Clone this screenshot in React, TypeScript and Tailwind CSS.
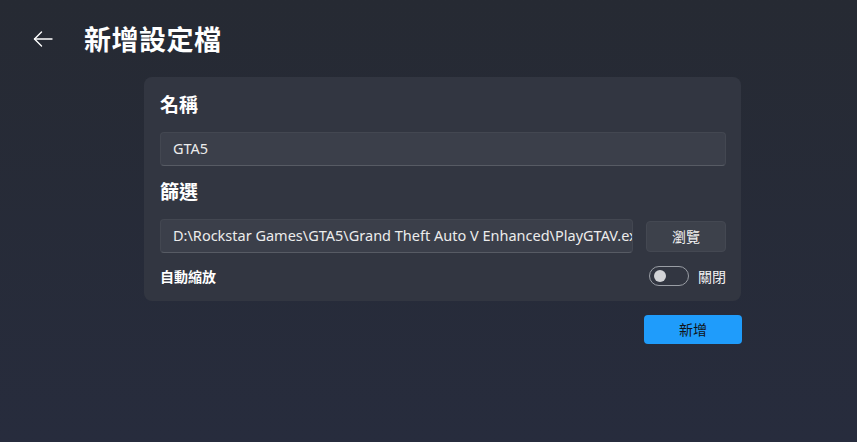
import React from "react";

const cjk = '"Noto Sans CJK TC", "Noto Sans", sans-serif';
const latin = '"Noto Sans", "Noto Sans CJK TC", sans-serif';

function BackArrow() {
  return (
    <svg width="20" height="16" viewBox="0 0 20 16" fill="none" stroke="#ffffff" strokeWidth="1.4" strokeLinecap="round" strokeLinejoin="round">
      <path d="M1.5 8H19" />
      <path d="M8.5 1L1.5 8L8.5 15" />
    </svg>
  );
}

export default function App() {
  return (
    <div
      className="w-[857px] h-[442px] overflow-hidden bg-gradient-to-b from-[#262a33] to-[#272c3d] text-white"
      style={{ fontFamily: cjk }}
    >
      <div className="flex items-center h-[77px]">
        <div className="ml-[33px] w-[20px] flex items-center">
          <BackArrow />
        </div>
        <div className="ml-[31px] text-[27px] font-bold leading-none tracking-[0.5px]">新增設定檔</div>
      </div>

      <div className="ml-[144px] w-[597px] rounded-lg bg-[#323641] pl-4 pr-[15px] pt-[13px] pb-[15px]">
        <div className="h-[28px] leading-[28px] text-[19px] font-bold">名稱</div>
        <div
          className="mt-[14px] h-[34px] rounded-[4px] bg-[#3b3f4a] border border-[#434751] border-b-[#575b64] pl-[12px] flex items-center text-[14.5px] text-[#ececec]"
          style={{ fontFamily: latin }}
        >
          GTA5
        </div>
        <div className="mt-[11px] h-[28px] leading-[28px] text-[19px] font-bold">篩選</div>
        <div className="mt-[14px] flex items-center gap-[13px]">
          <div
            className="flex-1 min-w-0 h-[34px] rounded-[4px] bg-[#3b3f4a] border border-[#434751] border-b-[#575b64] pl-[12px] flex items-center text-[14.5px] text-[#ececec] overflow-hidden whitespace-nowrap"
            style={{ fontFamily: latin }}
          >
            D:\Rockstar Games\GTA5\Grand Theft Auto V Enhanced\PlayGTAV.exe
          </div>
          <div className="w-[80px] h-[31px] rounded-[4px] bg-[#3d414b] border border-[#444852] flex items-center justify-center text-[14px] text-[#f2f2f2]">
            瀏覽
          </div>
        </div>
        <div className="mt-[13px] flex items-center justify-between h-[20px]">
          <div className="text-[14px] font-semibold">自動縮放</div>
          <div className="flex items-center gap-[9px]">
            <div className="w-[40px] h-[20px] rounded-full border border-[#9a9ea5] flex items-center pl-[4px]">
              <div className="w-[12px] h-[12px] rounded-full bg-[#d2d3d6]" />
            </div>
            <div className="text-[14px] text-[#f2f2f2]">關閉</div>
          </div>
        </div>
      </div>

      <div className="mt-[14px] ml-[644px] w-[98px] h-[29px] rounded-[4px] bg-[#1f9cfb] flex items-center justify-center text-[14px] text-[#111418]">
        新增
      </div>
    </div>
  );
}
